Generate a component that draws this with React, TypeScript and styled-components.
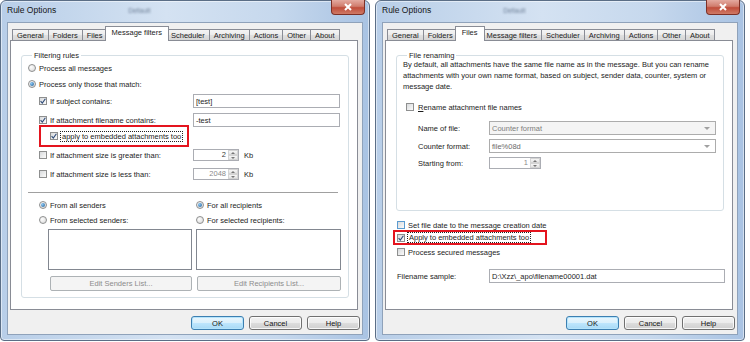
import React from 'react'
import styled, { createGlobalStyle, css } from 'styled-components'

const font = '"Liberation Sans", Arial, sans-serif'

const GlobalStyle = createGlobalStyle`
    html, body { margin: 0; padding: 0; background: #fff; }
    body { font-family: ${font}; font-size: 7.5px; color: #1c1c1c; }
    * { box-sizing: border-box; }
`

const Page = styled.div`
    display: flex;
    gap: 5px;
    width: 750px;
    height: 342px;
`

const Frame = styled.div`
    width: 370px;
    height: 341px;
    border: 1px solid #5b6e86;
    border-radius: 6px 6px 4px 4px;
    background: linear-gradient(90deg, #b8cee8 0%, #d4e2f2 45%, #c6d8ed 75%, #a9c3e3 100%);
    box-shadow: inset 0 0 0 1px rgba(255, 255, 255, 0.5);
    display: flex;
    flex-direction: column;
    padding: 0 6px 5px;
`

const TitleBar = styled.div`
    height: 21px;
    display: flex;
    align-items: flex-start;
    font-size: 8.5px;
    color: #151515;
`

const TitleText = styled.span`
    margin-top: 4px;
    line-height: 10px;
`

const GhostTitle = styled.span`
    margin: 5px 0 0 72px;
    line-height: 10px;
    font-size: 7px;
    color: #6d7f96;
    filter: blur(0.8px);
`

const CloseButton = styled.div`
    margin: -1px -2px 0 auto;
    width: 34px;
    height: 15px;
    border: 1px solid #7d3026;
    border-top: none;
    border-radius: 0 0 4px 4px;
    background: linear-gradient(#e4aaa0 0%, #d07c6d 45%, #c04d3b 55%, #cf7a66 100%);
    display: flex;
    align-items: center;
    justify-content: center;
`

const Client = styled.div`
    flex: 1;
    background: #f0f0f0;
    border: 1px solid #8fa2ba;
    padding: 3px 4px 0 2px;
    display: flex;
    flex-direction: column;
`

const TabStrip = styled.div`
    display: flex;
    align-items: flex-end;
    height: 14px;
    padding-left: 2px;
`

const Tab = styled.div<{ $active?: boolean }>`
    height: 11px;
    padding: 0 4px;
    margin-right: -1px;
    border: 1px solid #898c95;
    border-bottom: none;
    background: linear-gradient(#f4f4f4, #ececec 50%, #e0e0e0 51%, #d6d6d6);
    display: flex;
    align-items: center;
    white-space: nowrap;
    ${(p) =>
        p.$active &&
        css`
            position: relative;
            z-index: 1;
            height: 15px;
            margin: 0 -3px -1px -2px;
            padding: 0 6px 3px;
            background: #fff;
        `}
`

const Panel = styled.div`
    height: 270px;
    background: #fff;
    border: 1px solid #898c95;
    padding: 10px 8px 0 10px;
    display: flex;
    flex-direction: column;
`

const Group = styled.fieldset<{ $h?: number }>`
    margin: 0;
    min-width: 0;
    border: 1px solid #d5dfe5;
    border-radius: 3px;
    padding: 0 6px 6px;
    ${(p) => p.$h && `height: ${p.$h}px;`}
`

const Legend = styled.legend`
    margin-left: 4px;
    padding: 0 2px;
    line-height: 9px;
    color: #1c1c1c;
`

const Line = styled.div<{ $indent?: number; $mt?: number; $h?: number }>`
    display: flex;
    align-items: center;
    height: ${(p) => p.$h ?? 14}px;
    margin-left: ${(p) => p.$indent ?? 0}px;
    margin-top: ${(p) => p.$mt ?? 0}px;
    white-space: nowrap;
`

const LabelCell = styled.div<{ $w: number }>`
    width: ${(p) => p.$w}px;
    flex: none;
    display: flex;
    align-items: center;
`

const Option = styled.span<{ $gap?: number }>`
    display: inline-flex;
    align-items: center;
    gap: ${(p) => p.$gap ?? 3}px;
`

const Box = styled.span<{ $hot?: boolean }>`
    flex: none;
    width: 8px;
    height: 8px;
    border: 1px solid ${(p) => (p.$hot ? '#5b9bd0' : '#8e8f8f')};
    background: linear-gradient(135deg, #d8dadc, #fbfbfb);
    display: inline-flex;
    align-items: center;
    justify-content: center;
`

const Round = styled.span<{ $on?: boolean }>`
    flex: none;
    width: 8px;
    height: 8px;
    border-radius: 50%;
    border: 1px solid #8e8f8f;
    background: radial-gradient(circle at 35% 35%, #fdfdfd, #d6d6d6);
    display: inline-flex;
    align-items: center;
    justify-content: center;
    &::after {
        content: '';
        display: ${(p) => (p.$on ? 'block' : 'none')};
        width: 4px;
        height: 4px;
        border-radius: 50%;
        background: radial-gradient(circle at 35% 35%, #8cc8f4, #1d5b94);
    }
`

const TextField = styled.div<{ $w: number }>`
    width: ${(p) => p.$w}px;
    height: 14px;
    flex: none;
    border: 1px solid #abadb3;
    background: #fff;
    padding: 0 2px;
    display: flex;
    align-items: center;
    color: #1c1c1c;
`

const SpinBox = styled.div<{ $w: number }>`
    width: ${(p) => p.$w}px;
    height: 12px;
    flex: none;
    display: flex;
    border: 1px solid #abadb3;
    background: #fff;
`

const SpinValue = styled.span<{ $dim?: boolean }>`
    flex: 1;
    text-align: right;
    padding-right: 2px;
    line-height: 10px;
    color: ${(p) => (p.$dim ? '#8a8a8a' : '#3a3a3a')};
`

const SpinArrows = styled.div`
    width: 10px;
    display: flex;
    flex-direction: column;
`

const SpinHalf = styled.div`
    flex: 1;
    border: 1px solid #d4d4d4;
    background: linear-gradient(#f6f6f6, #e4e4e4);
    display: flex;
    align-items: center;
    justify-content: center;
`

const Arrow = styled.span<{ $down?: boolean }>`
    width: 0;
    height: 0;
    border-left: 2px solid transparent;
    border-right: 2px solid transparent;
    ${(p) => (p.$down ? 'border-top: 2px solid #777;' : 'border-bottom: 2px solid #777;')}
`

const Unit = styled.span`
    margin-left: 5px;
`

const Combo = styled.div<{ $w: number; $disabled?: boolean }>`
    width: ${(p) => p.$w}px;
    height: 14px;
    flex: none;
    border: 1px solid #acacac;
    background: ${(p) => (p.$disabled ? '#f4f4f4' : '#fff')};
    color: ${(p) => (p.$disabled ? '#7d7d7d' : '#6a6a6a')};
    padding: 0 5px 0 2px;
    display: flex;
    align-items: center;
    justify-content: space-between;
`

const ComboArrow = styled.span`
    width: 0;
    height: 0;
    border-left: 3px solid transparent;
    border-right: 3px solid transparent;
    border-top: 3px solid #a0a0a0;
`

const RedBox = styled.div<{ $w: number; $h: number; $pl: number; $ml: number; $mt: number }>`
    width: ${(p) => p.$w}px;
    height: ${(p) => p.$h}px;
    margin-left: ${(p) => p.$ml}px;
    margin-top: ${(p) => p.$mt}px;
    padding-left: ${(p) => p.$pl}px;
    border: 2px solid #e4141e;
    display: flex;
    align-items: center;
    white-space: nowrap;
`

const FocusText = styled.span`
    outline: 1px dotted #222;
    padding: 0 1px;
    line-height: 9px;
`

const Separator = styled.div`
    margin: 11px 4px 0 0;
    height: 2px;
    border-top: 1px solid #a0a0a0;
    border-bottom: 1px solid #fff;
`

const Columns = styled.div`
    display: grid;
    grid-template-columns: 153px 145px;
    column-gap: 4px;
    margin: 4px 0 0 11px;
`

const Column = styled.div`
    display: flex;
    flex-direction: column;
`

const ListBox = styled.div<{ $ml: number }>`
    height: 41px;
    margin: 2px 0 0 ${(p) => p.$ml}px;
    border: 1px solid #828790;
    background: #fff;
`

const GhostButton = styled.div<{ $ml: number }>`
    height: 15px;
    margin: 6px 0 0 ${(p) => p.$ml}px;
    border: 1px solid #adb2b5;
    border-radius: 2px;
    background: #f4f4f4;
    color: #8c8c8c;
    display: flex;
    align-items: center;
    justify-content: center;
`

const Paragraph = styled.p`
    margin: 0;
    line-height: 10.8px;
    color: #1c1c1c;
`

const ButtonRow = styled.div`
    display: flex;
    justify-content: flex-end;
    gap: 5px;
    margin: 6px -2px 0 0;
`

const DialogButton = styled.div<{ $default?: boolean }>`
    width: 53px;
    height: 14px;
    border: 1px solid #707070;
    border-radius: 3px;
    background: linear-gradient(#f2f2f2, #ebebeb 50%, #dddddd 51%, #cfcfcf);
    box-shadow: inset 0 0 0 1px rgba(255, 255, 255, 0.8);
    display: flex;
    align-items: center;
    justify-content: center;
    color: #151515;
    ${(p) =>
        p.$default &&
        css`
            border-color: #3c7fb1;
            background: linear-gradient(#eaf6fd, #d9f0fc 50%, #bee6fd 51%, #a7d9f5);
            box-shadow: inset 0 0 0 1px #b4e4fc;
        `}
`

const Check = ({ checked, hot }: { checked?: boolean; hot?: boolean }): JSX.Element => (
    <Box $hot={hot}>
        {checked && (
            <svg width="6" height="6" viewBox="0 0 6 6">
                <path d="M0.6 3.1 L2.3 5 L5.4 0.7" fill="none" stroke="#2c4a78" strokeWidth="1.1" />
            </svg>
        )}
    </Box>
)

const Spin = ({ value, width, dim }: { value: string; width: number; dim?: boolean }): JSX.Element => (
    <SpinBox $w={width}>
        <SpinValue $dim={dim}>{value}</SpinValue>
        <SpinArrows>
            <SpinHalf>
                <Arrow />
            </SpinHalf>
            <SpinHalf>
                <Arrow $down />
            </SpinHalf>
        </SpinArrows>
    </SpinBox>
)

const tabs = ['General', 'Folders', 'Files', 'Message filters', 'Scheduler', 'Archiving', 'Actions', 'Other', 'About']

const Window = ({ activeTab, children }: { activeTab: string; children: React.ReactNode }): JSX.Element => (
    <Frame>
        <TitleBar>
            <TitleText>Rule Options</TitleText>
            <GhostTitle>Default</GhostTitle>
            <CloseButton>
                <svg width="10" height="8" viewBox="0 0 10 8">
                    <path d="M2 1 L8 7 M8 1 L2 7" stroke="#fff" strokeWidth="2" />
                </svg>
            </CloseButton>
        </TitleBar>
        <Client>
            <TabStrip>
                {tabs.map((t) => (
                    <Tab key={t} $active={t === activeTab}>
                        {t}
                    </Tab>
                ))}
            </TabStrip>
            <Panel>{children}</Panel>
            <ButtonRow>
                <DialogButton $default>OK</DialogButton>
                <DialogButton>Cancel</DialogButton>
                <DialogButton>Help</DialogButton>
            </ButtonRow>
        </Client>
    </Frame>
)

const MessageFilters = (): JSX.Element => (
    <Group>
        <Legend>Filtering rules</Legend>
        <Line $mt={1}>
            <Option>
                <Round />
                Process all messages
            </Option>
        </Line>
        <Line $mt={2}>
            <Option>
                <Round $on />
                Process only those that match:
            </Option>
        </Line>
        <Line $indent={11} $mt={3}>
            <LabelCell $w={154}>
                <Option>
                    <Check checked />
                    If subject contains:
                </Option>
            </LabelCell>
            <TextField $w={147}>[test]</TextField>
        </Line>
        <Line $indent={11} $mt={5}>
            <LabelCell $w={154}>
                <Option>
                    <Check checked />
                    If attachment filename contains:
                </Option>
            </LabelCell>
            <TextField $w={147}>-test</TextField>
        </Line>
        <RedBox $w={150} $h={22} $pl={9} $ml={11} $mt={-2}>
            <Option>
                <Check checked />
                <FocusText>apply to embedded attachments too</FocusText>
            </Option>
        </RedBox>
        <Line $indent={11} $mt={1}>
            <LabelCell $w={154}>
                <Option>
                    <Check />
                    If attachment size is greater than:
                </Option>
            </LabelCell>
            <Spin value="2" width={46} />
            <Unit>Kb</Unit>
        </Line>
        <Line $indent={11} $mt={5}>
            <LabelCell $w={154}>
                <Option>
                    <Check />
                    If attachment size is less than:
                </Option>
            </LabelCell>
            <Spin value="2048" width={46} dim />
            <Unit>Kb</Unit>
        </Line>
        <Separator />
        <Columns>
            <Column>
                <Line>
                    <Option>
                        <Round $on />
                        From all senders
                    </Option>
                </Line>
                <Line $mt={1}>
                    <Option>
                        <Round />
                        From selected senders:
                    </Option>
                </Line>
                <ListBox $ml={9} />
                <GhostButton $ml={11}>Edit Senders List...</GhostButton>
            </Column>
            <Column>
                <Line>
                    <Option>
                        <Round $on />
                        For all recipients
                    </Option>
                </Line>
                <Line $mt={1}>
                    <Option>
                        <Round />
                        For selected recipients:
                    </Option>
                </Line>
                <ListBox $ml={0} />
                <GhostButton $ml={1}>Edit Recipients List...</GhostButton>
            </Column>
        </Columns>
    </Group>
)

const FileOptions = (): JSX.Element => (
    <>
        <Group $h={160}>
            <Legend>File renaming</Legend>
            <Paragraph>
                By default, all attachments have the same file name as in the message. But you can rename
                <br />
                attachments with your own name format, based on subject, sender data, counter, system or
                <br />
                message date.
            </Paragraph>
            <Line $indent={3} $mt={8}>
                <Option $gap={4}>
                    <Check />
                    <span>
                        <u>R</u>ename attachment file names
                    </span>
                </Option>
            </Line>
            <Line $indent={15} $mt={7}>
                <LabelCell $w={71}>Name of file:</LabelCell>
                <Combo $w={227} $disabled>
                    Counter format
                    <ComboArrow />
                </Combo>
            </Line>
            <Line $indent={15} $mt={4}>
                <LabelCell $w={71}>Counter format:</LabelCell>
                <Combo $w={227}>
                    file%08d
                    <ComboArrow />
                </Combo>
            </Line>
            <Line $indent={15} $mt={3}>
                <LabelCell $w={71}>Starting from:</LabelCell>
                <Spin value="1" width={52} dim />
            </Line>
        </Group>
        <Line $indent={1} $mt={7}>
            <Option>
                <Check hot />
                Set file date to the message creation date
            </Option>
        </Line>
        <RedBox $w={154} $h={15} $pl={2} $ml={-3} $mt={-2}>
            <Option>
                <Check checked />
                <FocusText>Apply to embedded attachments too</FocusText>
            </Option>
        </RedBox>
        <Line $indent={1}>
            <Option>
                <Check />
                Process secured messages
            </Option>
        </Line>
        <Line $indent={1} $mt={10}>
            <LabelCell $w={92}>Filename sample:</LabelCell>
            <TextField $w={236}>{'D:\\Xzz\\_apo\\filename00001.dat'}</TextField>
        </Line>
    </>
)

const App = (): JSX.Element => (
    <>
        <GlobalStyle />
        <Page>
            <Window activeTab="Message filters">
                <MessageFilters />
            </Window>
            <Window activeTab="Files">
                <FileOptions />
            </Window>
        </Page>
    </>
)

export default App
